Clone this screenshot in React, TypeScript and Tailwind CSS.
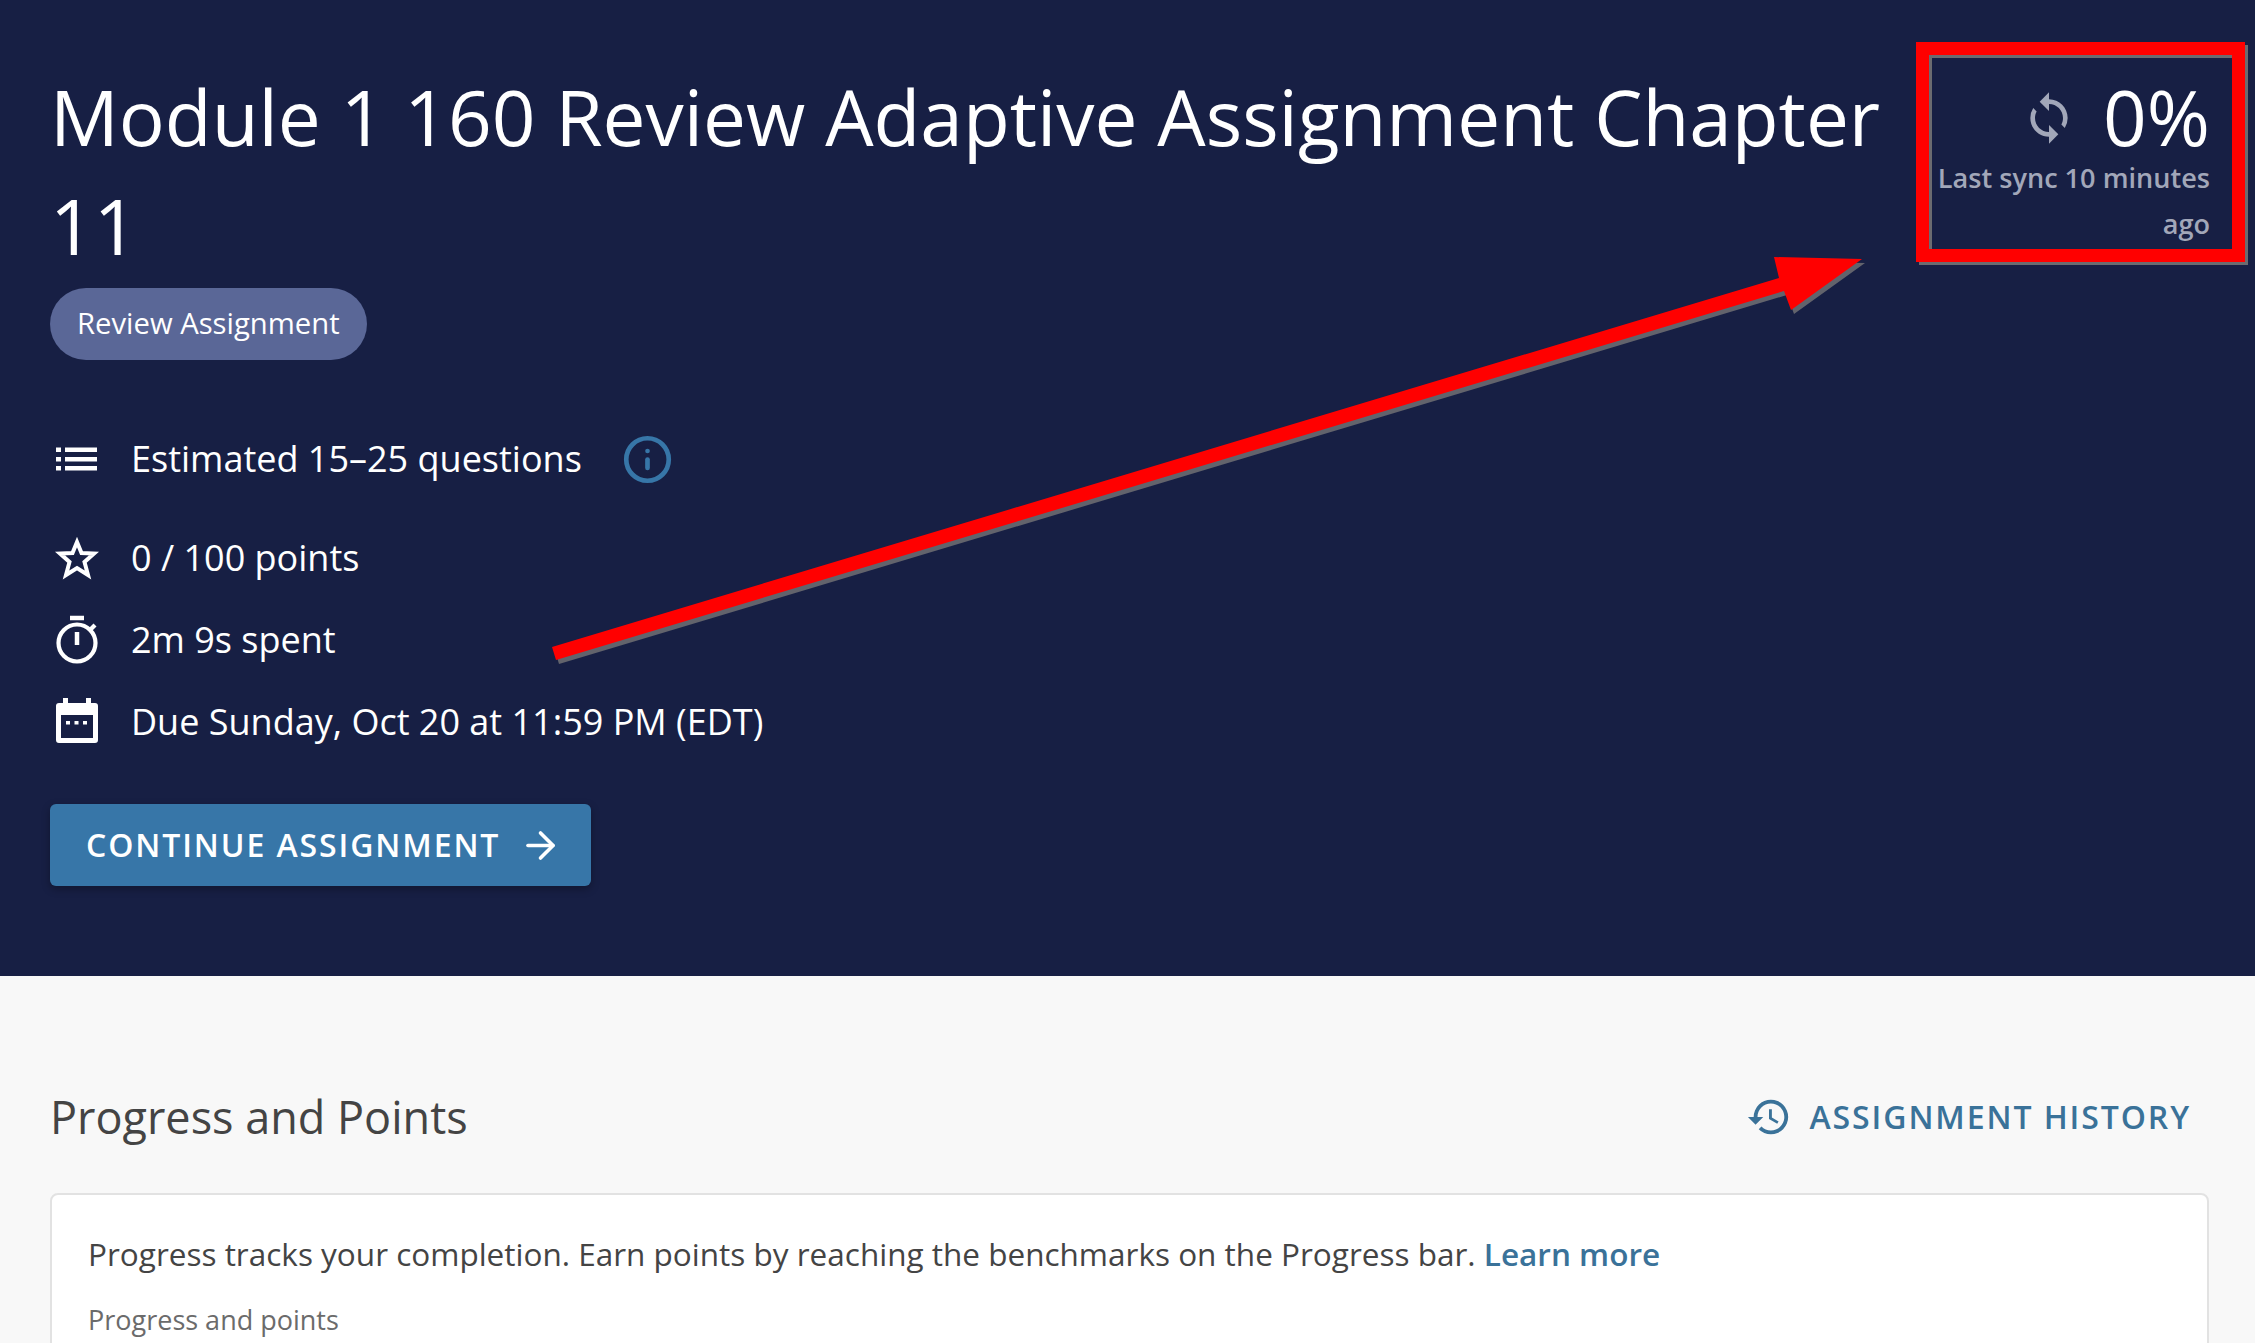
import { ArrowRight, Info } from "lucide-react";
import { MdHistory, MdSync } from "react-icons/md";

function ListIcon({ className }: { className?: string }) {
  return (
    <svg viewBox="0 0 52 52" className={className} fill="currentColor">
      <path d="M6 14.500h5v4.500H6zM15 14.500h32v4.500H15zM6 24h5v4.500H6zM15 24h32v4.500H15zM6 33h5v4.500H6zM15 33h32v4.500H15z" />
    </svg>
  );
}

function StarIcon({ className }: { className?: string }) {
  return (
    <svg viewBox="0 0 52 52" className={className} fill="none" stroke="currentColor" strokeWidth="4">
      <polygon points="27,10 31.500,21 44,21.500 34.500,30 38,43 27,36 16,43 19.500,30 10,21.500 22.500,21" />
    </svg>
  );
}

function TimerIcon({ className }: { className?: string }) {
  return (
    <svg viewBox="0 0 52 52" className={className} fill="none" stroke="currentColor" strokeWidth="4.200">
      <circle cx="27" cy="29" r="18.500" />
      <path d="M40 16l5-5" />
      <path d="M20 4h14M27 18v13" strokeWidth="4.500" />
    </svg>
  );
}

function CalendarIcon({ className }: { className?: string }) {
  return (
    <svg viewBox="0 0 52 52" className={className} fill="currentColor">
      <path
        fillRule="evenodd"
        d="M13 2h5v5h18V2h5v5h4a3 3 0 0 1 3 3v34a3 3 0 0 1-3 3H9a3 3 0 0 1-3-3V10a3 3 0 0 1 3-3h4V2zM11 19v23h32V19H11z"
      />
      <path d="M16 25h4v3.500h-4zM24.500 25h4v3.500h-4zM33 25h4v3.500h-4z" />
    </svg>
  );
}

function MetaRow({ icon, children, className }: { icon: React.ReactNode; children: React.ReactNode; className?: string }) {
  return (
    <div className={`flex items-center gap-[29px] h-[52px] text-[36px] text-white ${className ?? ""}`}>
      {icon}
      <span>{children}</span>
    </div>
  );
}

export default function App() {
  const arrow = "552,647 1779,278 1774,257 1862,259 1791,310 1784,291 556,660";

  return (
    <div className="relative h-[1343px] w-[2255px] overflow-hidden bg-[#f8f8f8] font-['Open_Sans',sans-serif]">
      <section className="flex h-[976px] items-start justify-between bg-[#171f44] pl-[50px] pr-[45px] pt-[62px]">
        <div className="w-[1860px]">
          <h1 className="text-[76.5px] leading-[109px] text-white">Module 1 160 Review Adaptive Assignment Chapter 11</h1>
          <div className="mt-[8px] inline-flex h-[72px] items-center rounded-full bg-[#5a6797] px-[27px] text-[29.25px] text-white">
            Review Assignment
          </div>
          <div className="mt-[73px] flex flex-col">
            <MetaRow icon={<ListIcon className="size-[52px]" />} className="mb-[47px]">
              <span className="inline-flex items-center gap-[40px]">
                Estimated 15–25 questions
                <Info className="size-[51px] text-[#3776a8]" strokeWidth={2.2} />
              </span>
            </MetaRow>
            <MetaRow icon={<StarIcon className="size-[52px]" />} className="mb-[30px]">0 / 100 points</MetaRow>
            <MetaRow icon={<TimerIcon className="size-[52px]" />} className="mb-[30px]">2m 9s spent</MetaRow>
            <MetaRow icon={<CalendarIcon className="size-[52px]" />}>Due Sunday, Oct 20 at 11:59 PM (EDT)</MetaRow>
          </div>
          <button className="mt-[56px] flex h-[82px] w-[541px] items-center gap-[19px] rounded-[6px] bg-[#3776a8] pl-[36px] text-[32px] font-semibold tracking-[1.9px] text-white shadow-[0_3px_8px_rgba(0,0,0,0.3)]">
            CONTINUE ASSIGNMENT
            <ArrowRight className="size-[43px]" strokeWidth={2} />
          </button>
        </div>
        <div className="flex w-[280px] flex-col items-end pt-[11px]">
          <div className="flex items-center gap-[26px]">
            <MdSync className="mt-[3px] size-[56px] text-[#a2a7b9]" />
            <span className="text-[76.5px] leading-[86px] text-white">0%</span>
          </div>
          <div className="mt-[-4px] text-right text-[27.1px] font-semibold leading-[46px] text-[#a2a7b9]">
            Last sync 10 minutes ago
          </div>
        </div>
      </section>

      <section className="pl-[50px] pr-[46px]">
        <div className="flex items-center justify-between pt-[110px] pr-[18px]">
          <h2 className="text-[45px] leading-[62px] text-[#444444]">Progress and Points</h2>
          <a className="flex items-center gap-[18px] text-[32px] font-semibold tracking-[1.9px] text-[#3a7299]">
            <MdHistory className="size-[46px]" />
            ASSIGNMENT HISTORY
          </a>
        </div>
        <div className="mt-[45px] h-[300px] rounded-[8px] border-2 border-[#e2e2e2] bg-white px-[36px] pt-[37px]">
          <p className="text-[31.5px] leading-[44px] text-[#444444]">
            Progress tracks your completion. Earn points by reaching the benchmarks on the Progress bar.{" "}
            <a className="font-semibold text-[#3a7299]">Learn more</a>
          </p>
          <p className="mt-[24px] text-[27px] leading-[40px] text-[#6b6b6b]">Progress and points</p>
        </div>
      </section>

      {/* red annotation drawn on top of the screenshot */}
      <div className="absolute left-[1916px] top-[42px] h-[220px] w-[329px] border-[13px] border-[#ff0000] shadow-[3px_3px_0_#6b6b70,inset_3px_3px_0_#6b6b70]" />
      <svg className="absolute left-0 top-0" width="2255" height="1343" viewBox="0 0 2255 1343">
        <polygon points={arrow} fill="#62636c" transform="translate(3 4)" />
        <polygon points={arrow} fill="#ff0000" />
      </svg>
    </div>
  );
}
